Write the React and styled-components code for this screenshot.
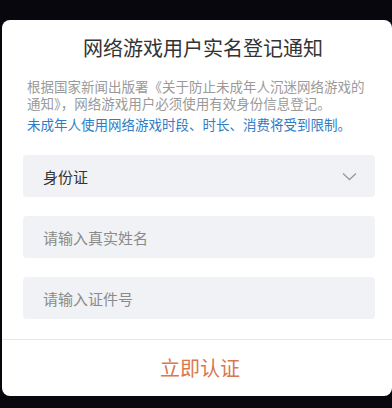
import React from 'react'
import styled, { createGlobalStyle } from 'styled-components'

const GlobalStyle = createGlobalStyle`
    html, body {
        margin: 0;
        padding: 0;
        background: #07070d;
    }
    body {
        font-family: "Noto Sans CJK SC", "Noto Sans", sans-serif;
    }
`

const Screen = styled.div`
    width: 392px;
    height: 408px;
    padding-top: 20px;
    box-sizing: border-box;
    overflow: hidden;
`

const Card = styled.div`
    margin-left: 2px;
    width: 390px;
    height: 376px;
    background: #fff;
    border-radius: 8px;
    display: flex;
    flex-direction: column;
    overflow: hidden;
`

const Body = styled.div`
    padding: 14px 17px 0 21px;
`

const Title = styled.h1`
    margin: 0;
    font-size: 20px;
    line-height: 28px;
    font-weight: 400;
    color: #333;
    text-align: center;
    padding-left: 8px;
`

const Notice = styled.p`
    margin: 16px 0 0 4px;
    font-size: 13.5px;
    line-height: 17px;
    color: #9a9a9a;
`

const Warning = styled.p`
    margin: 4px 0 0 4px;
    font-size: 13.5px;
    line-height: 17px;
    color: #2f7cc6;
`

const Fields = styled.div`
    margin-top: 22px;
    display: flex;
    flex-direction: column;
    gap: 19px;
`

const Field = styled.div`
    height: 42px;
    background: #f1f2f5;
    border-radius: 4px;
    display: flex;
    align-items: center;
    justify-content: space-between;
    padding: 0 18px 0 20px;
    font-size: 15px;
    color: ${p => (p.$filled ? '#333' : '#8a8a8a')};
`

const Footer = styled.div`
    margin-top: 20px;
    border-top: 1px solid #e6e6e6;
    flex: 1;
    display: flex;
    align-items: center;
    justify-content: center;
    padding-left: 6px;
    padding-bottom: 2px;
`

const Submit = styled.span`
    font-size: 20px;
    color: #d9774f;
`

const Chevron = () => (
    <svg width="15" height="9" viewBox="0 0 15 9">
        <path d="M1 1.5 L7.5 7.5 L14 1.5" fill="none" stroke="#9a9a9a" strokeWidth="1.3" />
    </svg>
)

const App = () => {
    return (
        <Screen>
            <GlobalStyle />
            <Card>
                <Body>
                    <Title>网络游戏用户实名登记通知</Title>
                    <Notice>根据国家新闻出版署《关于防止未成年人沉迷网络游戏的通知》，网络游戏用户必须使用有效身份信息登记。</Notice>
                    <Warning>未成年人使用网络游戏时段、时长、消费将受到限制。</Warning>
                    <Fields>
                        <Field $filled>
                            <span>身份证</span>
                            <Chevron />
                        </Field>
                        <Field>请输入真实姓名</Field>
                        <Field>请输入证件号</Field>
                    </Fields>
                </Body>
                <Footer>
                    <Submit>立即认证</Submit>
                </Footer>
            </Card>
        </Screen>
    )
}

export default App
